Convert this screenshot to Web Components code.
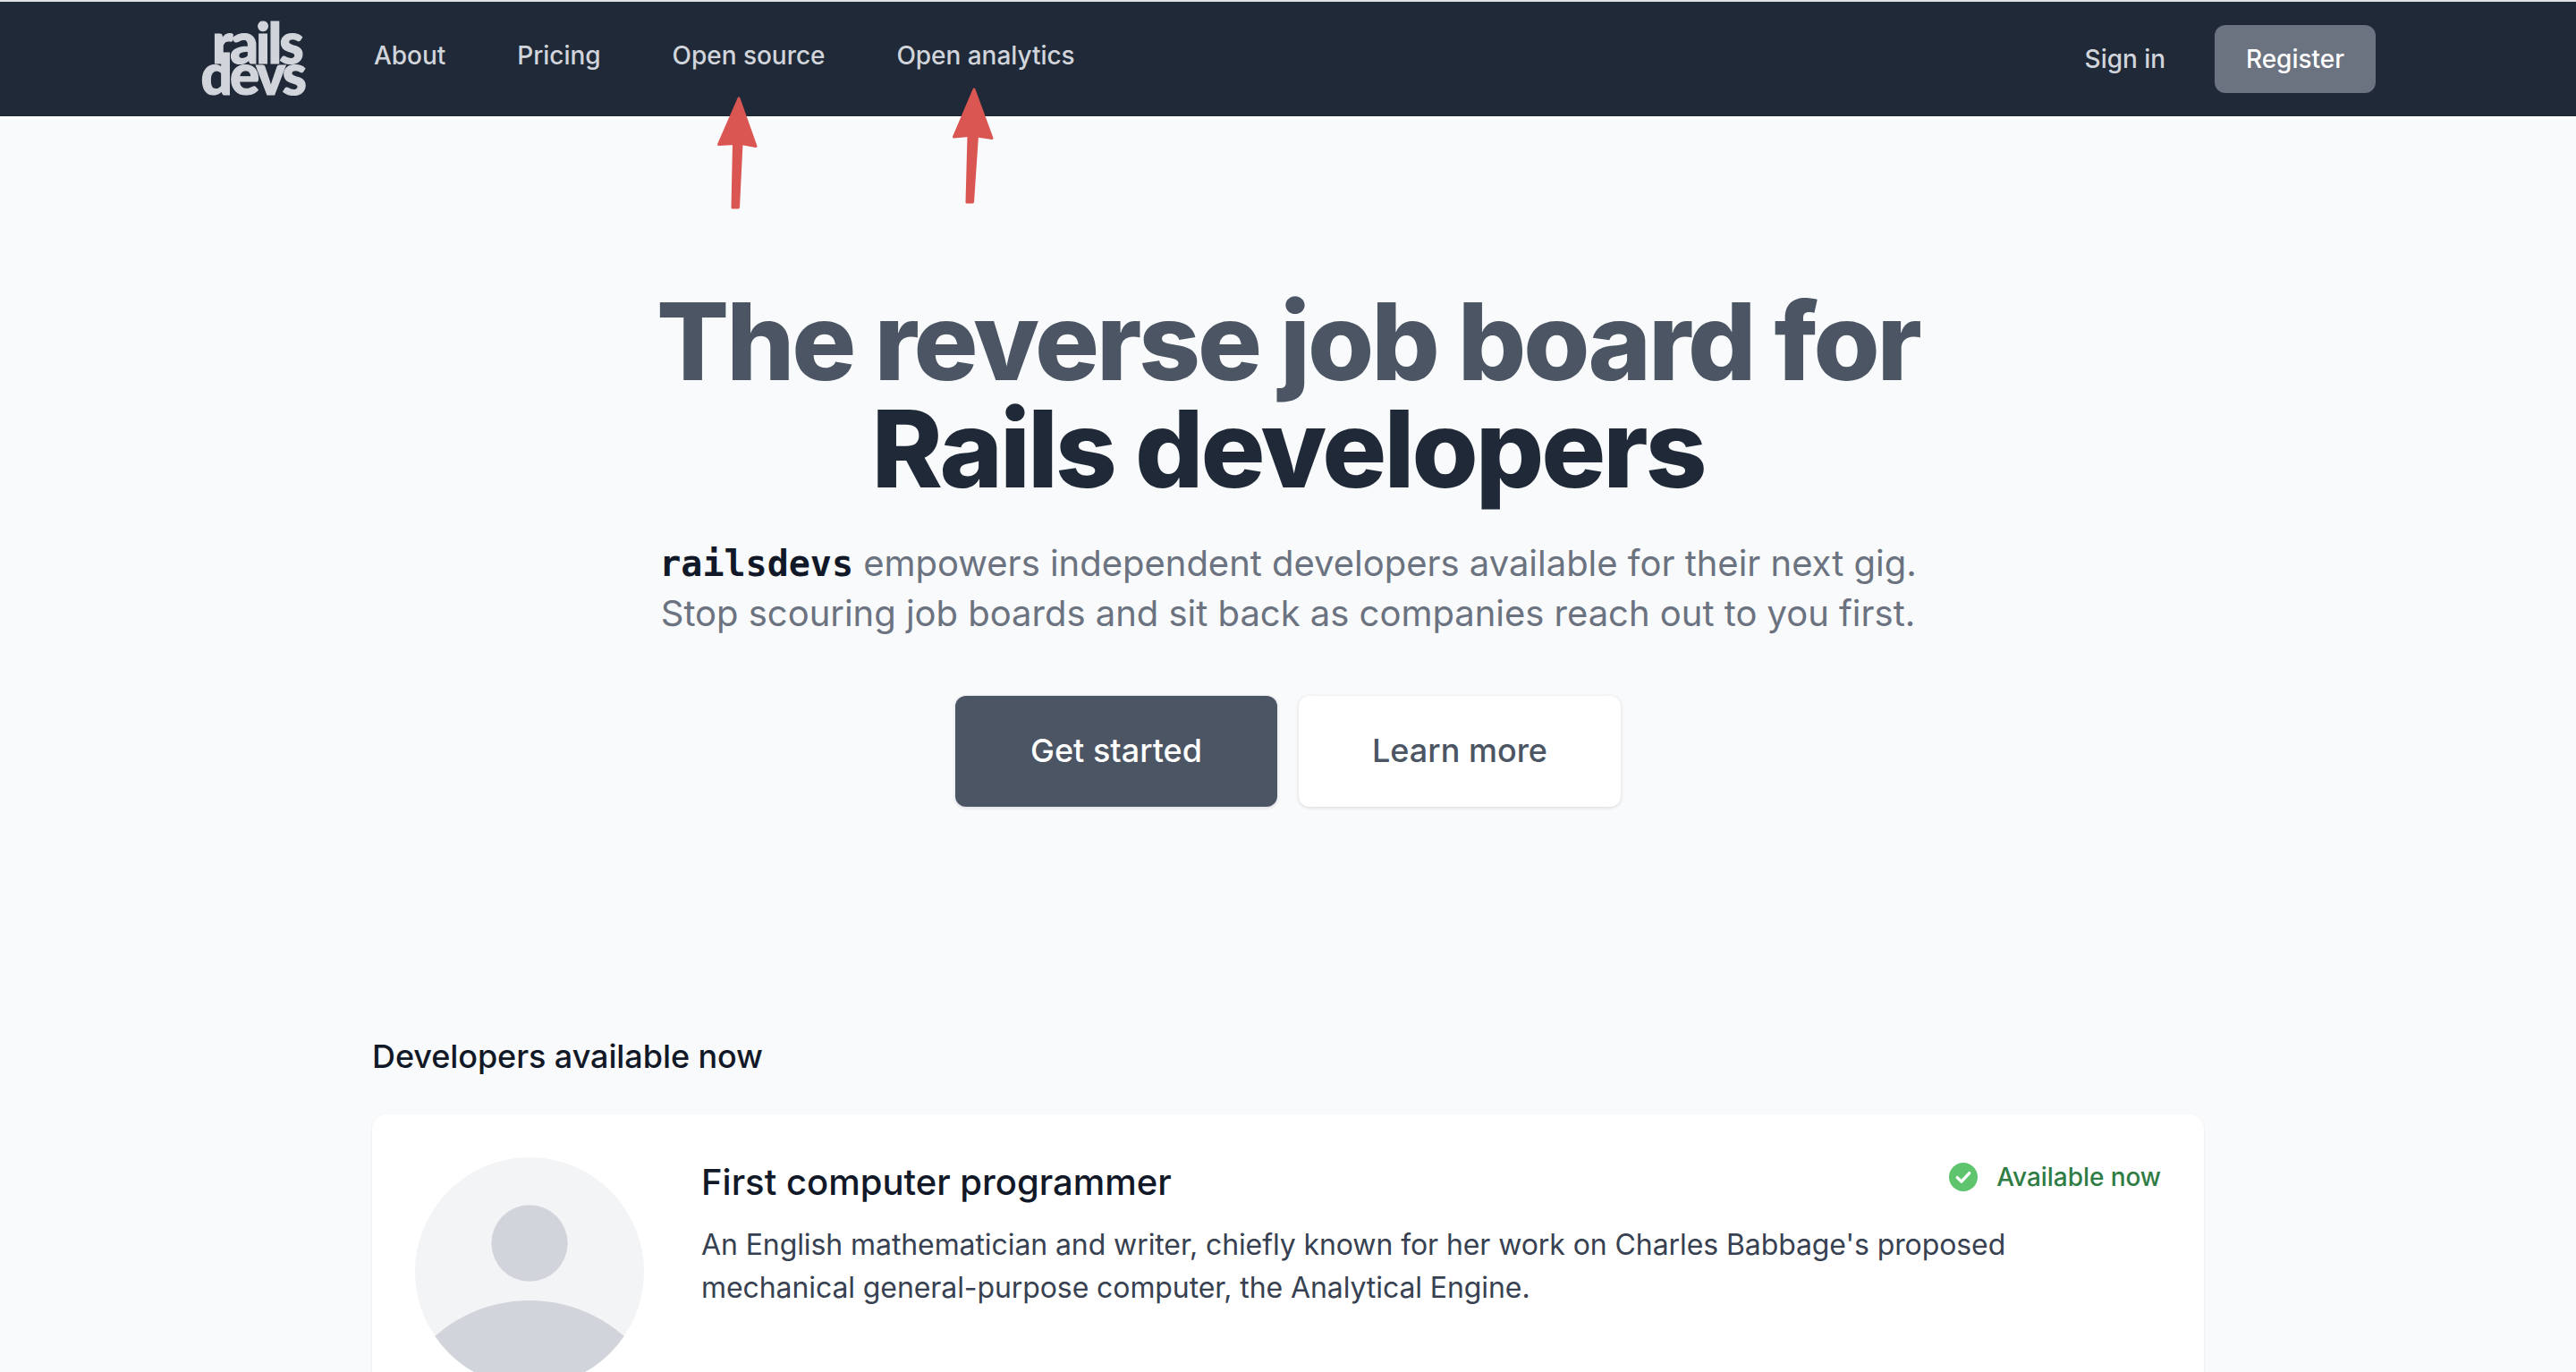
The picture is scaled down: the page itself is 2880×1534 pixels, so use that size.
<!DOCTYPE html>
<html lang="en"><head><meta charset="utf-8"><title>railsdevs</title>
<style>
html,body{margin:0;padding:0;height:100%;overflow:hidden;background:#f9fafb;}
body{font-family:Inter,"Liberation Sans",sans-serif;}
</style></head><body>
<app-page>
  <site-nav>
    <rails-logo slot="logo"></rails-logo>
    <nav-link slot="links">About</nav-link>
    <nav-link slot="links">Pricing</nav-link>
    <nav-link slot="links">Open source</nav-link>
    <nav-link slot="links">Open analytics</nav-link>
    <nav-link slot="actions" class="signin">Sign in</nav-link>
    <ui-button slot="actions" variant="register">Register</ui-button>
  </site-nav>
  <hero-section>
    <ui-button slot="cta" variant="primary">Get started</ui-button>
    <ui-button slot="cta" variant="secondary">Learn more</ui-button>
  </hero-section>
  <dev-list heading="Developers available now">
    <dev-card title="First computer programmer" status="Available now">An English mathematician and writer, chiefly known for her work on Charles Babbage's proposed mechanical general-purpose computer, the Analytical Engine.</dev-card>
  </dev-list>
  <annotation-arrows></annotation-arrows>
</app-page>
<script>
function def(name, html, init){
  customElements.define(name, class extends HTMLElement{
    constructor(){super();this.attachShadow({mode:'open'}).innerHTML=html;}
    connectedCallback(){ if(init) init(this); }
  });
}
def('app-page',`<style>:host{display:block;position:relative;width:2880px;height:1534px;overflow:hidden;background:#f9fafb;border-top:2px solid #e1e3e7;box-sizing:border-box}</style><slot></slot>`);
def('site-nav',`<style>
:host{display:block;background:#1f2937;height:128px}
.in{box-sizing:border-box;max-width:2560px;height:100%;margin:0 auto;padding:0 64px;display:flex;align-items:center;justify-content:space-between}
.l{display:flex;align-items:center}
.links{display:flex;gap:80px;margin-left:78px;padding-bottom:8px}
.r{display:flex;align-items:center;gap:55px}
</style><div class="in"><div class="l"><slot name="logo"></slot><div class="links"><slot name="links"></slot></div></div><div class="r"><slot name="actions"></slot></div></div>`);
def('rails-logo',`<style>
:host{display:flex;flex-direction:column;align-items:flex-end;font:900 62px/35px Lato,Inter,sans-serif;color:#d1d5db;width:116px;padding-bottom:2px;-webkit-text-stroke:1.2px #d1d5db}
span{display:block;white-space:nowrap}
.a{letter-spacing:-2.8px;margin-right:3px}.b{letter-spacing:-3px}
</style><span class="a">rails</span><span class="b">devs</span>`);
def('nav-link',`<style>:host{display:block;font:500 28px/40px Inter,sans-serif;color:#d1d5db;white-space:nowrap;letter-spacing:-.04px}</style><slot></slot>`);
def('ui-button',`<style>
:host{display:flex;align-items:center;justify-content:center;box-sizing:border-box;font-family:Inter,sans-serif;font-weight:500;white-space:nowrap}
:host([variant=register]){width:180px;height:76px;border-radius:12px;background:#6b7280;color:#fff;font-size:28px}
:host([variant=primary]),:host([variant=secondary]){width:360px;height:124px;border-radius:12px;font-size:36px;padding-bottom:2px;box-shadow:0 1px 4px rgba(0,0,0,.14)}
:host([variant=primary]){background:#4b5563;color:#fff}
:host([variant=secondary]){background:#fff;color:#4b5563}
</style><slot></slot>`);
def('hero-section',`<style>
:host{display:block;padding:192px 0 0;text-align:center}
h1{margin:0;font:800 120px/120px Inter,sans-serif;letter-spacing:-3.1px;color:#4b5563}
h1 b{display:block;font-weight:800;letter-spacing:-3px;color:#1f2937}
p{margin:40px auto 0;font:400 40px/56px Inter,sans-serif;letter-spacing:-.02px;color:#6b7280}
code{font:700 40px/56px "DejaVu Sans Mono",monospace;color:#111827;letter-spacing:0}
.c{display:flex;justify-content:center;gap:24px;margin-top:64px}
</style><h1>The reverse job board for<b>Rails developers</b></h1>
<p><code>railsdevs</code> empowers independent developers available for their next gig.<br>Stop scouring job boards and sit back as companies reach out to you first.</p>
<div class="c"><slot name="cta"></slot></div>`);
def('dev-list',`<style>
:host{display:block;box-sizing:border-box;width:2048px;margin:251px auto 0}
h2{margin:0 0 37px;font:500 36px/56px Inter,sans-serif;color:#111827;letter-spacing:-.08px}
</style><h2></h2><slot></slot>`,el=>{el.shadowRoot.querySelector('h2').textContent=el.getAttribute('heading');});
def('dev-card',`<style>
:host{display:flex;gap:64px;box-sizing:border-box;padding:48px;background:#fff;border-radius:16px;box-shadow:0 1px 3px rgba(0,0,0,.08)}
.av{flex:none;width:256px;height:256px;border-radius:50%;background:#f3f4f6;overflow:hidden;color:#d1d5db}
.av svg{display:block;width:100%;height:100%}
.m{flex:1;min-width:0}
.top{display:flex;justify-content:space-between;align-items:flex-start}
h3{margin:0;font:500 40px/56px Inter,sans-serif;color:#111827}
.st{display:flex;align-items:center;gap:21px;margin-top:2px;font:500 28px/40px Inter,sans-serif;color:#2f7d45;letter-spacing:-.06px}
.st svg{width:32px;height:32px;display:block}
p{margin:18px 0 0;padding-right:120px;font:400 32px/48px Inter,sans-serif;color:#374151;letter-spacing:-.09px}
</style>
<div class="av"><svg viewBox="0 0 24 24" fill="currentColor"><path d="M24 20.993V24H0v-2.996A14.977 14.977 0 0112.004 15c4.904 0 9.26 2.354 11.996 5.993zM16.002 8.999a4 4 0 11-8 0 4 4 0 018 0z"/></svg></div>
<div class="m"><div class="top"><h3></h3><div class="st"><svg viewBox="0 0 20 20"><circle cx="10" cy="10" r="10" fill="#5ec46e"/><path d="M5.8 10.4l2.9 2.8 5.5-6" fill="none" stroke="#fff" stroke-width="2.1" stroke-linecap="round" stroke-linejoin="round"/></svg><span></span></div></div><p><slot></slot></p></div>`,el=>{
  el.shadowRoot.querySelector('h3').textContent=el.getAttribute('title');
  el.shadowRoot.querySelector('.st span').textContent=el.getAttribute('status');
});
def('annotation-arrows',`<style>:host{position:absolute;left:0;top:-2px;width:2880px;height:300px;pointer-events:none}svg{display:block}</style>
<svg width="2880" height="300" viewBox="0 0 2880 300"><g fill="#d95652" stroke="#d95652" stroke-width="3" stroke-linejoin="round">
<path d="M826 110L803.500 161.500 820.500 160.500 819 232 825.500 232 829 160.500 845 163.500Z"/>
<path d="M1089 100L1066.500 153 1083 151.500 1081 226 1087.500 226 1092.500 152 1109 154.500Z"/></g></svg>`);
</script>
</body></html>
